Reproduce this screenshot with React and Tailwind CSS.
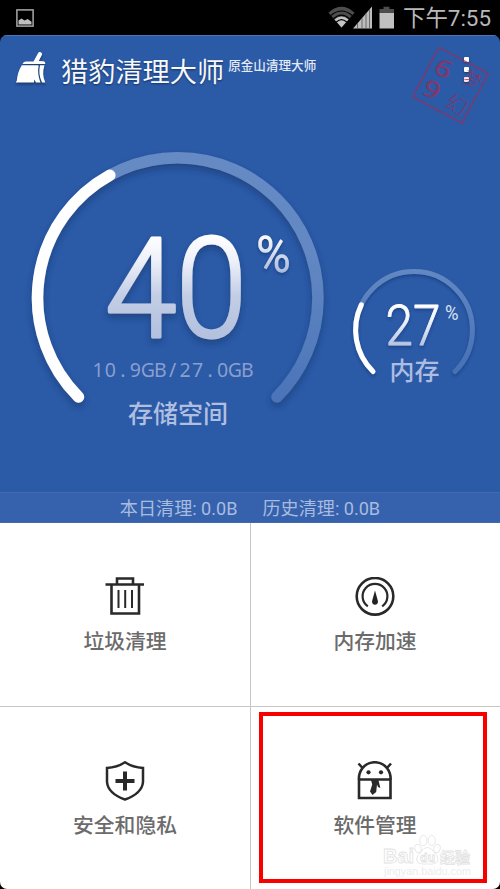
import React from "react";

const sans = "font-['Roboto','Noto_Sans_CJK_SC',sans-serif]";
const cjk = "'Roboto','Noto Sans CJK SC',sans-serif";

function StatusBar() {
  return (
    <div className="flex h-[35px] shrink-0 items-center justify-between bg-black pl-4 pr-[9px] text-[#b9b9b9]">
      <svg width="18" height="18" viewBox="0 0 18 18" fill="none">
        <rect x="0.9" y="0.9" width="16.2" height="16.2" stroke="#a8a8a8" strokeWidth="1.5" />
        <path d="M2.5 15.5v-4l3-2 3 2 3.2-1.4 3.8 2.6v2.8z" fill="#c0c0c0" />
      </svg>
      <div className="flex h-full items-center">
        <svg width="69" height="24" viewBox="0 0 69 24" className="mr-[6px]">
          <path d="M0.5 6.7Q13.500-5 26.5 6.7L13.5 21.5z" fill="#4d4d4d" />
          <path d="M6.5 13.5Q13.5 7.5 20.5 13.5L13.5 21.5z" fill="#c4c4c4" />
          <g fill="none" stroke="#000" strokeWidth="1.2">
            <path d="M2.8 9.5Q13.5 0.5 24.2 9.5" />
            <path d="M5.5 12.8Q13.5 5.5 21.5 12.8" />
            <path d="M8.3 16Q13.5 11.3 18.7 16" />
          </g>
          <path d="M25 22.5L44 0.5v22z" fill="#bdbdbd" />
          <g stroke="#555" strokeWidth="0.8">
            <path d="M29.5 17v6M34 12v11M38 7v16M41.5 3v20" />
          </g>
          <path d="M51.5 3h4V0.700h6V3h4.500v5H51.500z" fill="#4d4d4d" />
          <rect x="51.5" y="7" width="14.5" height="15.5" fill="#c0c0c0" />
        </svg>
        <span className="pt-[2px] text-[22.400px] leading-none whitespace-nowrap">下午7:55</span>
      </div>
    </div>
  );
}

function Stamp() {
  return (
    <svg className="absolute left-[408px] top-[7px]" width="86" height="84" viewBox="408 43 86 84">
      <g transform="translate(450.5 85.2) rotate(28)" fill="#a02c55" fillOpacity="0.72" fontFamily="'Noto Sans','Noto Sans CJK SC',sans-serif">
        <rect x="-28" y="-28" width="56" height="56" fill="none" stroke="#a02c55" strokeOpacity="0.75" strokeWidth="1.4" />
        <text x="-22.5" y="-3" fontSize="24" fontWeight="500" textLength="17" lengthAdjust="spacingAndGlyphs">6</text>
        <text x="-23" y="21" fontSize="24" fontWeight="500" textLength="17" lengthAdjust="spacingAndGlyphs">9</text>
        <text x="7" y="-8" fontSize="19" fontWeight="300">梦</text>
        <text x="4" y="22" fontSize="21" fontWeight="300">幻</text>
      </g>
    </svg>
  );
}

function Header() {
  return (
    <div className="relative flex h-[75px] items-start border-t border-[#4b76b8] pl-[15px] pr-[31px]">
      <svg className="mt-[15px] drop-shadow-[0_2px_1px_rgba(0,0,0,0.35)]" width="31" height="34" viewBox="15 51 31 34">
        <path d="M33.5 61.5L38 53.2q1-1.6 2.7-0.9t1.3 2.5L38.8 61l4.8.3q2 .5 1.6 2.6H22.5q1-2.4 3-2.5z" fill="#fff" />
        <path d="M21.800 65.3h16.8q-1.5 8.5 1.8 17.2h-4.5l-1.500-3-.5 3H16q0-1 .9-2 .5-8 4.9-15.200z" fill="#fff" />
        <path d="M40 65.300h4.500q-3 9.500.8 17.200H42q-4-8-2-17.200z" fill="#fff" />
      </svg>
      <span className="ml-[15px] mt-[21px] text-[27.200px] leading-[32px] whitespace-nowrap text-[#f5f8fc] [text-shadow:0_1px_2px_rgba(0,0,0,0.45)]">猎豹清理大师</span>
      <span className="ml-[4px] mt-[21px] text-[12.600px] font-medium leading-[18px] whitespace-nowrap text-[#e5ebf5]">原金山清理大师</span>
      <div className="ml-auto mt-[21px] flex flex-col gap-[5px]">
        <i className="h-[5px] w-[5px] rounded-[1px] bg-white shadow-[0_1px_2px_#17376d]" />
        <i className="h-[5px] w-[5px] rounded-[1px] bg-white shadow-[0_1px_2px_#17376d]" />
        <i className="h-[5px] w-[5px] rounded-[1px] bg-[#ffe3e3] shadow-[0_1px_2px_#17376d]" />
      </div>
      <Stamp />
    </div>
  );
}

const usage = "10.9GB/27.0GB";
const usageX = usage.split("").map((_, i) => 98 + i * 12.45).join(" ");

function Gauges() {
  return (
    <svg width="500" height="340" viewBox="0 130 500 340" className="block">
      <defs>
        <linearGradient id="big" gradientUnits="userSpaceOnUse" x1="0" y1="-102" x2="0" y2="0">
          <stop offset="0" stopColor="#ffffff" />
          <stop offset="0.25" stopColor="#eef1f8" />
          <stop offset="0.6" stopColor="#c3cde5" />
          <stop offset="1" stopColor="#b3c1df" />
        </linearGradient>
        <linearGradient id="pct" gradientUnits="userSpaceOnUse" x1="0" y1="-38" x2="0" y2="0">
          <stop offset="0" stopColor="#ffffff" />
          <stop offset="1" stopColor="#aebddd" />
        </linearGradient>
        <linearGradient id="small" gradientUnits="userSpaceOnUse" x1="0" y1="-40" x2="0" y2="0">
          <stop offset="0" stopColor="#ffffff" />
          <stop offset="0.35" stopColor="#f5f7fc" />
          <stop offset="1" stopColor="#b8c5e2" />
        </linearGradient>
        <linearGradient id="trackBig" gradientUnits="userSpaceOnUse" x1="0" y1="152" x2="0" y2="403">
          <stop offset="0" stopColor="#668ac4" />
          <stop offset="0.4" stopColor="#6388c3" />
          <stop offset="1" stopColor="#4a74b8" />
        </linearGradient>
        <linearGradient id="trackSmall" gradientUnits="userSpaceOnUse" x1="0" y1="269" x2="0" y2="375">
          <stop offset="0" stopColor="#6388c3" />
          <stop offset="1" stopColor="#4570b5" />
        </linearGradient>
        <filter id="shadow" x="-20%" y="-20%" width="140%" height="150%">
          <feDropShadow dx="0" dy="4" stdDeviation="3" floodColor="#102d60" floodOpacity="0.5" />
        </filter>
        <filter id="tight" x="-20%" y="-20%" width="140%" height="150%">
          <feDropShadow dx="0" dy="2" stdDeviation="1.5" floodColor="#102d60" floodOpacity="0.45" />
        </filter>
      </defs>

      <g fill="none" strokeLinecap="round">
        <g strokeWidth="11.500" filter="url(#shadow)">
          <path d="M78.500 397A140.200 140.200 0 1 1 277 397" stroke="url(#trackBig)" />
          <path d="M78.500 397A140.200 140.200 0 0 1 109.800 175.300" stroke="#fff" />
        </g>
        <g strokeWidth="5" filter="url(#tight)">
          <path d="M373 371.500A58.400 58.400 0 1 1 455 371.500" stroke="url(#trackSmall)" />
          <path d="M373 371.500A58.400 58.400 0 0 1 361.300 304.800" stroke="#fff" />
        </g>
      </g>

      <g fontFamily="Roboto, sans-serif" fontWeight="300" strokeLinejoin="round">
        <g fill="url(#big)" stroke="url(#big)" strokeWidth="3" filter="url(#shadow)" fontSize="139">
          <text transform="translate(105 336.500) scale(0.93 1)">4</text>
          <text transform="translate(176 336.500) scale(0.920 1)">0</text>
        </g>
        <text transform="translate(256.500 271.500) scale(0.920 1)" fontSize="50" fill="url(#pct)" stroke="url(#pct)" strokeWidth="1.400" filter="url(#tight)">%</text>
        <g fill="url(#small)" stroke="url(#small)" strokeWidth="0.800" filter="url(#tight)" fontSize="55">
          <text transform="translate(385.500 345) scale(0.900 1)">2</text>
          <text transform="translate(413 345) scale(0.900 1)">7</text>
        </g>
        <text x="445" y="319.500" fontSize="20" fontWeight="400" fill="#dbe3f2" textLength="13.500" lengthAdjust="spacingAndGlyphs">%</text>
      </g>

      <text x={usageX} y="376.500" textAnchor="middle" fontFamily="'Noto Sans',sans-serif" fontSize="19.500" fill="#8a9fce">{usage}</text>
      <text x="128" y="423" fontFamily={cjk} fontWeight="500" fontSize="25" fill="#b0bfe0">存储空间</text>
      <text x="389.500" y="380" fontFamily={cjk} fontWeight="500" fontSize="25" fill="#aebddf">内存</text>
    </svg>
  );
}

function TrashIcon() {
  return (
    <g>
      <path d="M6.500 8.500v28h27.500v-28M0.500 7.500h38.500M12 7V1.500h16v5.500" strokeWidth="2.600" />
      <path d="M13.500 13v18M20.200 13v18M27 13v18" strokeWidth="2" />
    </g>
  );
}

function SpeedIcon() {
  return (
    <g>
      <circle cx="20" cy="19.300" r="18.300" strokeWidth="2.600" />
      <path d="M12.800 29.300A12.400 12.400 0 1 1 27.200 29.300" strokeWidth="2.200" />
      <path d="M20 13.500l2.900 10.500a3 3 0 1 1-5.800 0z" fill="#222" stroke="none" />
    </g>
  );
}

function ShieldIcon() {
  return (
    <g>
      <path d="M20 1.300Q12 6.500 2 7v14Q3 32.500 20 38.500 37 32.500 38 21V7Q28 6.500 20 1.300z" strokeWidth="2.500" />
      <path d="M20 10.500v19M10.500 20h19" strokeWidth="4" />
    </g>
  );
}

function RobotIcon() {
  return (
    <g>
      <path d="M4 18.500v18.500h31.500V18.500z" strokeWidth="2.600" />
      <path d="M4 18.500v-3C7-3.500 32.500-3.500 35.500 15.500v3M3.500 2.500l4.500 5M36 2.500l-4.500 5" strokeWidth="2.600" />
      <circle cx="13.500" cy="11.300" r="2.100" fill="#292929" stroke="none" />
      <circle cx="26" cy="11.300" r="2.100" fill="#292929" stroke="none" />
      <path d="M16 19h7.500l1.800 8-2.300-1-1-2.500-.8 7.500-3.700 3-2.500-3.500 2.200-7z" fill="#292929" stroke="none" />
    </g>
  );
}

function Tile({ icon, label, className }) {
  return (
    <div className={"flex flex-col items-center " + className}>
      <svg width="40" height="40" viewBox="0 0 40 40" fill="none" stroke="#292929">
        {icon}
      </svg>
      <span className="mt-[10px] text-[20.800px] font-medium leading-[30px] text-[#6b6b6b]">{label}</span>
    </div>
  );
}

function Watermark() {
  return (
    <svg className="absolute left-[380px] top-[830px]" width="96" height="50" viewBox="380 830 96 50">
      <g fill="#fff" stroke="#e2e2e2" strokeWidth="0.800" fontFamily="'Liberation Sans','Noto Sans CJK SC',sans-serif" fontWeight="700">
        <text x="383" y="863" fontSize="20" textLength="31" lengthAdjust="spacingAndGlyphs">Bai</text>
        <ellipse cx="418" cy="848.500" rx="3.200" ry="4.300" transform="rotate(-15 418 848.500)" />
        <ellipse cx="423.300" cy="840.500" rx="3.600" ry="5.200" />
        <ellipse cx="431.700" cy="840.500" rx="3.600" ry="5.200" />
        <ellipse cx="437" cy="848.500" rx="3.200" ry="4.300" transform="rotate(15 437 848.500)" />
        <path d="M427.500 847.500q4 0 6 4 5 4 4.500 8.500-1 5-10.500 4-9.500 1-11-4 0-4.500 5-8.500 2-4 6-4z" />
        <text x="420" y="861.500" fontSize="12" textLength="15">du</text>
        <text x="440" y="862.500" fontSize="15">经验</text>
        <text x="384" y="874.500" fontSize="10.500" fontWeight="400" fill="#ececec" stroke="none" textLength="87" lengthAdjust="spacingAndGlyphs">jingyan.baidu.com</text>
      </g>
    </svg>
  );
}

export default function App() {
  return (
    <div className={"relative flex h-[889px] w-[500px] flex-col overflow-hidden bg-black " + sans}>
      <StatusBar />
      <div className="flex h-[488px] shrink-0 flex-col overflow-hidden rounded-t-[7px] bg-[#2b5aa7]">
        <Header />
        <div className="h-[382px] shrink-0 pt-[20px]">
          <Gauges />
        </div>
        <div className="flex h-[31px] shrink-0 items-center justify-center gap-[25px] border-y border-[#4169ae] bg-[#3662ad] pt-[2px] text-[18.100px] whitespace-nowrap text-[#a9bbdf]">
          <span>本日清理: 0.0B</span>
          <span>历史清理: 0.0B</span>
        </div>
      </div>
      <div className="grid h-[366px] shrink-0 grid-cols-2 grid-rows-2 overflow-hidden rounded-b-[7px] bg-white">
        <Tile className="pt-[54px]" icon={<TrashIcon />} label="垃圾清理" />
        <Tile className="border-l border-[#c6c6c6] pt-[54px] pr-px" icon={<SpeedIcon />} label="内存加速" />
        <Tile className="border-t border-[#c6c6c6] pt-[54px]" icon={<ShieldIcon />} label="安全和隐私" />
        <Tile className="border-l border-t border-[#c6c6c6] pt-[54px] pr-px" icon={<RobotIcon />} label="软件管理" />
      </div>
      <Watermark />
      <div className="absolute left-[259px] top-[712px] h-[171px] w-[228px] border-4 border-[#f90000]" />
    </div>
  );
}
